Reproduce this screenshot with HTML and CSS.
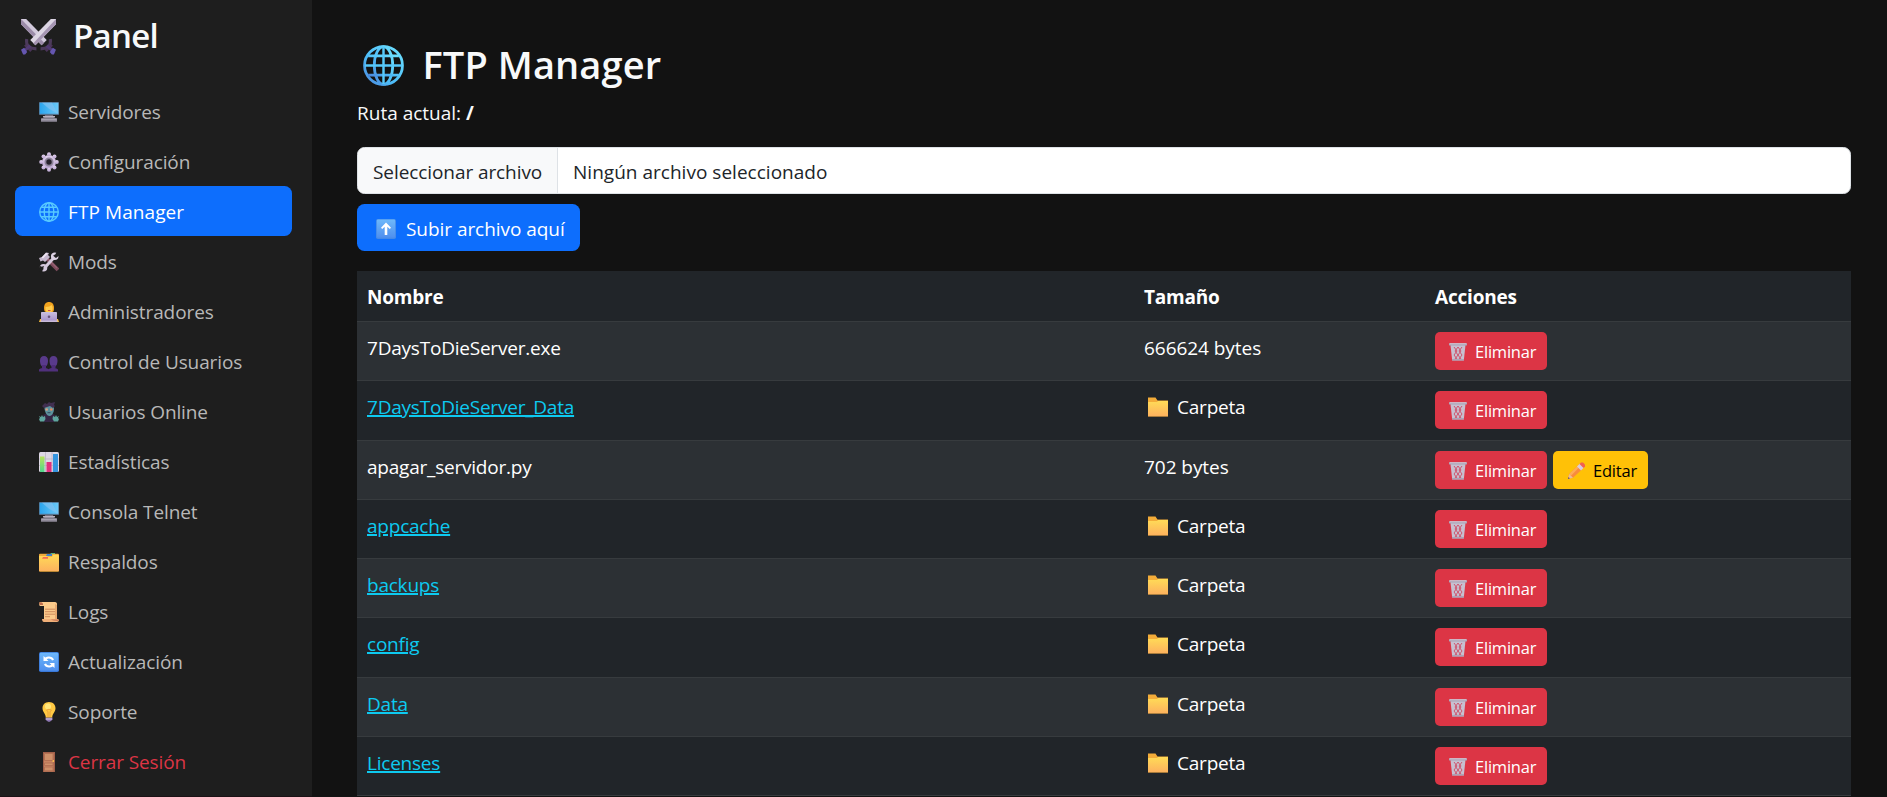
FILE: index.html
```
<!DOCTYPE html>
<html lang="es">
<head>
<meta charset="utf-8">
<title>FTP Manager</title>
<link rel="stylesheet" href="styles.css">
</head>
<body>
<svg class="sprite" width="0" height="0" aria-hidden="true">
  <defs>
    <linearGradient id="g-screen" x1="0" y1="0" x2="1" y2="0"><stop offset="0" stop-color="#2ba5ee"/><stop offset="1" stop-color="#6bc9f8"/></linearGradient>
    <linearGradient id="g-folder" x1="0" y1="0" x2="0" y2="1"><stop offset="0" stop-color="#ffdb57"/><stop offset="1" stop-color="#fdb25e"/></linearGradient>
    <linearGradient id="g-blue" x1="0" y1="0" x2="0" y2="1"><stop offset="0" stop-color="#6db8fa"/><stop offset="1" stop-color="#4f8fee"/></linearGradient>
    <linearGradient id="g-globe" x1="1" y1="0" x2="0" y2="1"><stop offset="0" stop-color="#6fe3ff"/><stop offset=".6" stop-color="#4dbcf8"/><stop offset="1" stop-color="#4a86dc"/></linearGradient>
    <linearGradient id="g-gear" x1="0" y1="0" x2="0" y2="1"><stop offset="0" stop-color="#e3d3ee"/><stop offset="1" stop-color="#b9a3cf"/></linearGradient>
    <linearGradient id="g-green" x1="0" y1="0" x2="0" y2="1"><stop offset="0" stop-color="#b8e45c"/><stop offset="1" stop-color="#4fd58c"/></linearGradient>
    <linearGradient id="g-laptop" x1="0" y1="0" x2="0" y2="1"><stop offset="0" stop-color="#c9bfdf"/><stop offset="1" stop-color="#a892cc"/></linearGradient>
  </defs>
  <symbol id="swords" viewBox="0 0 36 36">
    <path d="M5 26l6 6M31 26l-6 6" stroke="#4a3458" stroke-width="3"/>
    <path d="M6.500 20.500c-1 6 2.500 9.500 9.500 9.500M29.500 20.500c1 6-2.500 9.500-9.500 9.500" fill="none" stroke="#4c3a5b" stroke-width="3"/>
    <path d="M4 32l6-5M32 32l-6-5" stroke="#513a72" stroke-width="3"/>
    <path d="M1 31l3-2 3 4-2 2.500H3zM35 31l-3-2-3 4 2 2.500h2z" fill="#6556b0"/>
    <path d="M1 1h5l20 20.500-5 5L1 6z" fill="#d2c9dc"/><path d="M1 1l22.500 23-2.500 2.500L1 6z" fill="#9b8ba8"/>
    <path d="M35 1h-5L10 21.500l5 5L35 6z" fill="#dcd5e3"/><path d="M35 1v5L15 26.500l-2-2z" fill="#a595b2"/>
  </symbol>
  <symbol id="monitor" viewBox="0 0 20 20">
    <path d="M6 13h8l1 3H5z" fill="#75717f"/><rect x="4" y="14" width="12" height="1.500" fill="#b7b1c0"/>
    <rect width="20" height="13" rx=".7" fill="#55708c"/><rect x=".7" y=".8" width="18.600" height="11" fill="url(#g-screen)"/>
    <path d="M3 .8h10l6 11-9-5z" fill="#7fc1f2" opacity=".75"/>
    <rect x="2" y="16.300" width="16" height="3.500" rx=".5" fill="#8f8998"/><path d="M2.500 17.200h15" stroke="#b9b2c2" stroke-width=".8"/>
  </symbol>
  <symbol id="gear" viewBox="0 0 20 20">
    <g fill="url(#g-gear)"><circle cx="10" cy="10" r="7"/><circle cx="10" cy="2.200" r="2"/><circle cx="10" cy="17.800" r="2"/><circle cx="2.200" cy="10" r="2"/><circle cx="17.800" cy="10" r="2"/><circle cx="4.500" cy="4.500" r="2"/><circle cx="15.500" cy="4.500" r="2"/><circle cx="4.500" cy="15.500" r="2"/><circle cx="15.500" cy="15.500" r="2"/></g>
    <circle cx="10" cy="10" r="3.600" fill="#26212b" stroke="#8d829a" stroke-width="1.800"/>
  </symbol>
  <symbol id="globe" viewBox="0 0 40 40">
    <g fill="none" stroke="url(#g-globe)" stroke-width="2.700"><circle cx="20" cy="20" r="18.500"/><ellipse cx="20" cy="20" rx="9" ry="18.500"/><path d="M5 10.500h30M5 29.500h30"/></g>
    <path d="M2 20h36M20 2v36" stroke="#57c9fa" stroke-width="2.400"/>
  </symbol>
  <symbol id="globe-sm" viewBox="0 0 20 20">
    <g fill="none" stroke="#58caff" stroke-width="1.400"><circle cx="10" cy="10" r="9.300"/><ellipse cx="10" cy="10" rx="4.800" ry="9.300"/><path d="M1 10h18M10 1v18M2.500 5.200h15M2.500 14.800h15"/></g>
  </symbol>
  <symbol id="tools" viewBox="0 0 20 20">
    <path d="M7 6l12 12" stroke="#7c4b5c" stroke-width="3.800"/><path d="M8.500 6.500l9.500 9.500" stroke="#976274" stroke-width="1.200"/>
    <path d="M4.500 17L16 4.500" stroke="#d6cadd" stroke-width="3"/>
    <circle cx="15.700" cy="4.300" r="2.700" fill="none" stroke="#ddd3e4" stroke-width="2.200"/><path d="M15 4.500l3-5 3 3.500-4 3z" fill="#1e1e1e"/>
    <circle cx="4.500" cy="15.700" r="2.700" fill="none" stroke="#d4c8dc" stroke-width="2.200"/><path d="M4.800 15.400L1 14l-2 4 3.500 3z" fill="#1e1e1e"/>
    <path d="M0 6l3-1 4-4.500 3 .5-1 2 2 2-5 5-2-1.500-2.500 1z" fill="#c5b7ce"/><path d="M2.500 5.500L7 1l2 .5-5 5z" fill="#eee6f3"/>
  </symbol>
  <symbol id="admin" viewBox="0 0 20 20">
    <path d="M5 6c0-4 2-6 5-6s5 2 5 6-1 4-2 4H7C6 10 5 9 5 6z" fill="#f2a31d"/><path d="M6.500 5c3 0 5-1 6-2 1 1 1.500 3 1 5-.8 2-2 3-3.500 3S7 10 6.500 8z" fill="#ffcb4c"/><path d="M9 8.500h2.500" stroke="#c94b52"/>
    <path d="M0 20l1-3h2v3zM20 20l-1-3h-2v3z" fill="#ffc23d"/><rect x="2" y="10" width="16" height="9" rx=".7" fill="url(#g-laptop)"/><path d="M1.500 18.500h17V20h-17z" fill="#c9bbd9"/><circle cx="10" cy="14.800" r="1.300" fill="#665078"/>
  </symbol>
  <symbol id="users" viewBox="0 0 20 20">
    <path d="M1 8.500c0-3 1.500-4.500 4-4.500s4 1.500 4 4.500-1 6.500-4 6.500-4-3.500-4-6.500zM10.500 8.500c0-3 1.500-4.500 4-4.500s4 1.500 4 4.500-1 6.500-4 6.500-4-3.500-4-6.500z" fill="#593a8b"/><path d="M3 13h4v3H3zM12.500 13h4v3h-4z" fill="#4d2d78"/><path d="M0 19.500v-2c2-1.700 7.500-2 9.500-.3 2-1.700 7.500-1.400 9.500.3v2z" fill="#50307c"/>
  </symbol>
  <symbol id="zombie" viewBox="0 0 20 20">
    <path d="M5 20l-1-7 4-2h4l4 2-1 7z" fill="#342543"/><path d="M5.500 6c0-2 1-3.500 4.500-3.500S15 4.500 15 7s-1.500 7-4.500 7S5.500 9 5.500 6z" fill="#5c929d"/><path d="M3 4l3-3 2 1 2-2 2 1 4-1-1 3 1 1-2 2-3-2-6 2z" fill="#412f50"/>
    <circle cx="7.700" cy="7.500" r="1.300" fill="#d7a184"/><circle cx="12.300" cy="7.500" r="1.300" fill="#e18b62"/><path d="M8.500 10.700h3" stroke="#374c60"/>
    <path d="M0 14l2 1 1-2 1 2 2-1 .5 3L5 19.500H1L0 17l1-1zM20 14l-2 1-1-2-1 2-2-1-.5 3 1.500 2.500h4l1-2.500-1-1z" fill="#5fa69f"/>
  </symbol>
  <symbol id="chart" viewBox="0 0 20 20">
    <rect width="20" height="20" rx="1.500" fill="#ded8e5"/><path d="M0 7h20M0 13.500h20M6.500 0v20M13 0v20" stroke="#b8afc3" stroke-width=".7"/><rect x="1" y="4.500" width="4.500" height="15.500" fill="url(#g-green)"/><rect x="7.500" y="10" width="5" height="10" fill="#e12f7c"/><rect x="14" y="2" width="5" height="18" fill="#3494df"/>
  </symbol>
  <symbol id="backup" viewBox="0 0 20 20">
    <path d="M11 2.500h5V1h-4z" fill="#36b98a"/><rect y="1.800" width="20" height="18" rx="1" fill="#eeaa3c"/><path d="M7 4l1-2h5v2z" fill="#3e83cc"/><path d="M0 4h8l1 .8h4l1-2h5l1 1V19H0z" fill="url(#g-folder)"/><path d="M3 6.700l1-1.700h5v1.700z" fill="#f46a54"/>
  </symbol>
  <symbol id="scroll" viewBox="0 0 20 20">
    <path d="M1 0h15c1.500 0 2 1 2 2v15H5V4H1C0 4 0 0 1 0z" fill="#fbca8b"/><path d="M0 1c0-1 4-1 4 1v1H1z" fill="#bc6d4d"/><path d="M16 2l2 1v14h-2z" fill="#e8a96f"/><path d="M6 7.200h10M6 9.700h10M6 12.200h10M6 14.700h5" stroke="#ce8c5d"/><path d="M3 17h16l1 1c0 1-1 2-2 2H5c-1.500 0-2-1.500-2-3z" fill="#f0af78"/><path d="M12 17.500h7l1 1c-1 1-7 0-8-1z" fill="#c97755"/>
  </symbol>
  <symbol id="refresh" viewBox="0 0 20 20">
    <rect width="20" height="20" rx="1.800" fill="#3878d8"/><rect x=".8" y=".8" width="18.400" height="18" rx="1.200" fill="url(#g-blue)"/>
    <path d="M4.500 4v5h5L7.700 7.200c2-1.200 4.500-.5 5.300 1.300l2-.8C13.800 4.500 9.500 3.400 6.200 5.600zM15.500 16v-5h-5l1.800 1.800c-2 1.200-4.500.5-5.300-1.300l-2 .8c1.200 3.200 5.500 4.300 8.800 2.100z" fill="#fff"/>
  </symbol>
  <symbol id="bulb" viewBox="0 0 20 20">
    <path d="M6.500 15.500h7v2L12 19l-2 1-2-1-1.500-1.500z" fill="#8d76b2"/><path d="M7 17h6" stroke="#d5c8e3"/><path d="M10 0c4 0 6.500 2.800 6.500 6.200C16.500 10 13.500 11 13.200 15.500H6.800C6.500 11 3.500 10 3.500 6.200 3.500 2.800 6 0 10 0z" fill="#ffc943"/><circle cx="9" cy="4.500" r="3" fill="#ffe67c"/><path d="M9 15V9.500L7.500 8.300C9 7 11 7 12.500 8.300L11 9.500V15" fill="none" stroke="#e49b3b" stroke-width=".8"/>
  </symbol>
  <symbol id="door" viewBox="0 0 20 20">
    <rect x="4" width="12" height="20" fill="#a15f49"/><rect x="5" y="1" width="9.500" height="18.500" fill="#c88562"/><path d="M5.500 1.500h8.500v7H5.500zM5.500 11h8.500v2.500H5.500zM5.500 15h8.500v3.800H5.500z" fill="#cf9069" stroke="#ae6c50" stroke-width=".8"/><circle cx="14.300" cy="9" r=".9" fill="#ffc34d"/>
  </symbol>
  <symbol id="up" viewBox="0 0 20 20">
    <rect width="20" height="20" rx="1.800" fill="#4389e8"/><rect x=".8" y=".6" width="18.400" height="18.200" rx="1.200" fill="url(#g-blue)"/><path d="M10 3.500l5 5.200-1.200 1.300-2.500-2.200V16H8.700V7.800L6.200 10 5 8.700z" fill="#fff"/>
  </symbol>
  <symbol id="folder" viewBox="0 0 20 20">
    <path d="M0 .5h7.500l2 3H20v16H0z" fill="#f3ac39"/><path d="M0 5h9l1-1h10v15.200H0z" fill="url(#g-folder)"/>
  </symbol>
  <symbol id="trash" viewBox="0 0 18 18">
    <path d="M1.500 2h15l-1.700 15.500H3.200z" fill="#c7c0d0"/><path d="M5 4l3 4-3 4 3 4M9 4L6 8l3 4-3 4M9 4l3 4-3 4 3 4M13 4l-3 4 3 4-3 4" fill="none" stroke="#cf4b64" stroke-width=".9"/><path d="M3 16.800h12" stroke="#a79db3" stroke-width="1.300"/><rect y=".3" width="18" height="2.300" rx=".7" fill="#aaa2b5"/><path d="M.5 .8h17" stroke="#e0dae6" stroke-width=".8"/>
  </symbol>
  <symbol id="pencil" viewBox="0 0 18 18">
    <path d="M1 17l1.200-5L12.500 2l4 4L6 15.800z" fill="#f98b3d"/><path d="M2.200 12L12.500 2l1.500 1.500L4 13.800z" fill="#ffad54"/><path d="M10 4.500L13 1.500l4 4L14 8.500z" fill="#d8ccdf"/><path d="M12.500 2L14 .5h2l2 2v2l-1.500 1.500z" fill="#f2604f"/><path d="M2.200 12L6 15.800 1 17z" fill="#ebbc93"/><path d="M1.500 15l1.300 1.500L1 17z" fill="#594962"/>
  </symbol>
</svg>

<div class="layout">
  <aside class="sidebar">
    <h4 class="brand"><svg class="brand-icon"><use href="#swords"/></svg><span>Panel</span></h4>
    <nav class="nav">
      <a class="nav-link"><svg class="icon"><use href="#monitor"/></svg><span>Servidores</span></a>
      <a class="nav-link"><svg class="icon"><use href="#gear"/></svg><span>Configuración</span></a>
      <a class="nav-link active"><svg class="icon"><use href="#globe-sm"/></svg><span>FTP Manager</span></a>
      <a class="nav-link"><svg class="icon"><use href="#tools"/></svg><span>Mods</span></a>
      <a class="nav-link"><svg class="icon"><use href="#admin"/></svg><span>Administradores</span></a>
      <a class="nav-link"><svg class="icon"><use href="#users"/></svg><span>Control de Usuarios</span></a>
      <a class="nav-link"><svg class="icon"><use href="#zombie"/></svg><span>Usuarios Online</span></a>
      <a class="nav-link"><svg class="icon"><use href="#chart"/></svg><span>Estadísticas</span></a>
      <a class="nav-link"><svg class="icon"><use href="#monitor"/></svg><span>Consola Telnet</span></a>
      <a class="nav-link"><svg class="icon"><use href="#backup"/></svg><span>Respaldos</span></a>
      <a class="nav-link"><svg class="icon"><use href="#scroll"/></svg><span>Logs</span></a>
      <a class="nav-link"><svg class="icon"><use href="#refresh"/></svg><span>Actualización</span></a>
      <a class="nav-link"><svg class="icon"><use href="#bulb"/></svg><span>Soporte</span></a>
      <a class="nav-link danger"><svg class="icon"><use href="#door"/></svg><span>Cerrar Sesión</span></a>
    </nav>
  </aside>
  <main class="content">
    <h2 class="title"><svg class="title-icon"><use href="#globe"/></svg><span>FTP Manager</span></h2>
    <p class="path">Ruta actual: <strong>/</strong></p>
    <div class="file-input"><span class="file-button">Seleccionar archivo</span><span class="file-name">Ningún archivo seleccionado</span></div>
    <button class="upload"><svg class="icon"><use href="#up"/></svg><span>Subir archivo aquí</span></button>
    <table class="files">
      <colgroup><col class="col-name"><col class="col-size"><col></colgroup>
      <thead><tr><th>Nombre</th><th>Tamaño</th><th>Acciones</th></tr></thead>
      <tbody>
        <tr><td>7DaysToDieServer.exe</td><td class="size">666624 bytes</td><td><div class="actions"><button class="btn delete"><svg class="btn-icon"><use href="#trash"/></svg><span>Eliminar</span></button></div></td></tr>
        <tr><td><a class="link">7DaysToDieServer_Data</a></td><td><div class="kind"><svg class="icon"><use href="#folder"/></svg><span>Carpeta</span></div></td><td><div class="actions"><button class="btn delete"><svg class="btn-icon"><use href="#trash"/></svg><span>Eliminar</span></button></div></td></tr>
        <tr><td>apagar_servidor.py</td><td class="size">702 bytes</td><td><div class="actions"><button class="btn delete"><svg class="btn-icon"><use href="#trash"/></svg><span>Eliminar</span></button><button class="btn edit"><svg class="btn-icon"><use href="#pencil"/></svg><span>Editar</span></button></div></td></tr>
        <tr><td><a class="link">appcache</a></td><td><div class="kind"><svg class="icon"><use href="#folder"/></svg><span>Carpeta</span></div></td><td><div class="actions"><button class="btn delete"><svg class="btn-icon"><use href="#trash"/></svg><span>Eliminar</span></button></div></td></tr>
        <tr><td><a class="link">backups</a></td><td><div class="kind"><svg class="icon"><use href="#folder"/></svg><span>Carpeta</span></div></td><td><div class="actions"><button class="btn delete"><svg class="btn-icon"><use href="#trash"/></svg><span>Eliminar</span></button></div></td></tr>
        <tr><td><a class="link">config</a></td><td><div class="kind"><svg class="icon"><use href="#folder"/></svg><span>Carpeta</span></div></td><td><div class="actions"><button class="btn delete"><svg class="btn-icon"><use href="#trash"/></svg><span>Eliminar</span></button></div></td></tr>
        <tr><td><a class="link">Data</a></td><td><div class="kind"><svg class="icon"><use href="#folder"/></svg><span>Carpeta</span></div></td><td><div class="actions"><button class="btn delete"><svg class="btn-icon"><use href="#trash"/></svg><span>Eliminar</span></button></div></td></tr>
        <tr><td><a class="link">Licenses</a></td><td><div class="kind"><svg class="icon"><use href="#folder"/></svg><span>Carpeta</span></div></td><td><div class="actions"><button class="btn delete"><svg class="btn-icon"><use href="#trash"/></svg><span>Eliminar</span></button></div></td></tr>
      </tbody>
    </table>
  </main>
</div>
</body>
</html>
```
FILE: styles.css
```
* { box-sizing: border-box; }

body {
  margin: 0;
  height: 797px;
  overflow: hidden;
  background: #121212;
  color: #f8f9fa;
  font-family: "Open Sans", "Noto Sans", sans-serif;
  font-size: 19px;
  line-height: 30px;
  letter-spacing: -0.22px;
}

.sprite { position: absolute; }

.layout { display: flex; height: 797px; }

.sidebar {
  width: 312px;
  flex: none;
  padding: 15px 20px 0 15px;
  border-bottom: 1px solid #1b1115;
  background: #1e1e1e;
}

.brand {
  display: flex;
  align-items: center;
  height: 42px;
  margin: 0 0 29px;
  padding-left: 5px;
  gap: 16px;
  font-size: 33px;
  font-weight: 600;
  line-height: 42px;
  letter-spacing: -0.7px;
}

.brand-icon { width: 37px; height: 37px; }

.nav { display: flex; flex-direction: column; }

.nav-link {
  display: flex;
  align-items: center;
  height: 50px;
  padding: 2px 20px 0 24px;
  gap: 9px;
  border-radius: 7.500px;
  color: #b8b8b8;
  letter-spacing: -0.1px;
}

.nav-link.active { background: #0d6efd; color: #fff; letter-spacing: 0.08px; }
.nav-link.danger { color: #dc3545; }

.icon { width: 20px; height: 20px; flex: none; }

.content { flex: 1; padding: 40px 36px 0 45px; }

.title {
  display: flex;
  align-items: center;
  height: 48px;
  margin: 0 0 10px;
  padding-left: 6px;
  gap: 18.500px;
  font-size: 38px;
  font-weight: 600;
  line-height: 48px;
  letter-spacing: 0.1px;
}

.title-icon { width: 41px; height: 41px; margin-top: 2px; }

.path { height: 30px; margin: 0 0 19px; letter-spacing: 0; }

.file-input {
  display: flex;
  height: 47px;
  margin-bottom: 10px;
  overflow: hidden;
  border: 1px solid #dee2e6;
  border-radius: 7.500px;
  background: #fff;
  color: #212529;
  letter-spacing: 0.02px;
}

.file-button {
  width: 200px;
  padding: 9px 0 0 15px;
  border-right: 1px solid #dee2e6;
  background: #f8f9fa;
  letter-spacing: -0.08px;
}

.file-name { padding: 9px 15px 0; }

button {
  display: flex;
  align-items: center;
  border: 0;
  color: #fff;
  font: inherit;
  letter-spacing: inherit;
}

.upload {
  width: 223px;
  height: 47px;
  margin-bottom: 20px;
  padding: 3px 0 0 19px;
  gap: 10px;
  border-radius: 7.500px;
  background: #0d6efd;
  letter-spacing: -0.05px;
}

.files {
  width: 100%;
  table-layout: fixed;
  border-collapse: separate;
  border-spacing: 0;
  background: #212529;
  color: #fff;
}

.col-name { width: 777px; }
.col-size { width: 291px; }

th, td {
  padding: 0 10px;
  border-bottom: 1px solid #373b3e;
  text-align: left;
  vertical-align: top;
}

th { height: 51px; padding-top: 11px; font-weight: 700; letter-spacing: -0.2px; }
td { height: 59.250px; padding-top: 11px; }
tbody tr:nth-child(odd) { background: #2c3034; }
.size { letter-spacing: -0.05px; }

.link {
  color: #0dcaf0;
  text-decoration: underline;
  text-decoration-thickness: 2px;
  text-underline-offset: 1px;
}

.kind { display: flex; padding-left: 4px; gap: 9px; }
.kind .icon { margin-top: 5px; }

.actions { display: flex; gap: 6px; margin-top: -1px; }

.btn {
  height: 38px;
  padding: 2px 9px 0 14px;
  gap: 8px;
  border-radius: 5px;
  font-size: 16.500px;
}

.delete { width: 112px; background: #dc3545; }
.edit { width: 95px; background: #ffc107; color: #000; }
.btn-icon { width: 18px; height: 18px; flex: none; }
```
